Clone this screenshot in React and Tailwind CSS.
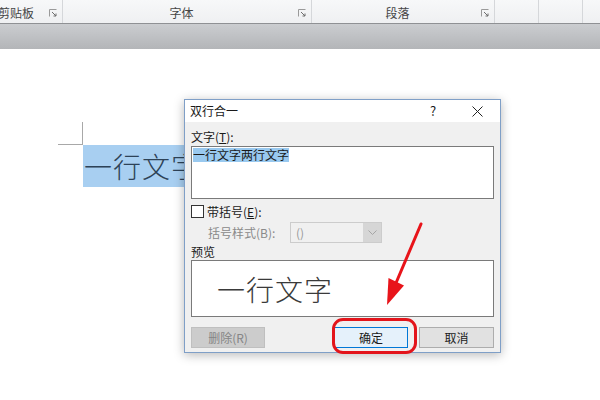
import React from 'react';

const CJK = { fontFamily: '"Noto Sans CJK SC", "Noto Sans", sans-serif' };

function Launcher() {
  // small "dialog launcher" glyph in the ribbon group corner
  return (
    <svg width="8" height="8" viewBox="0 0 8 8" className="shrink-0">
      <path d="M0.5 7.5V0.5H7.5" fill="none" stroke="#9a9a9a" strokeWidth="1" />
      <path d="M3 3L7 7M7 4.5V7H4.5" fill="none" stroke="#6d6d6d" strokeWidth="1" />
    </svg>
  );
}

function RibbonGroup({ width, label, labelClass = '', launcher = true }) {
  return (
    <div
      className="h-full flex items-center border-r border-[#d5d7da] pt-[3px] relative"
      style={{ width }}
    >
      <span className={`flex-1 text-[12px] text-[#454545] leading-none whitespace-nowrap ${labelClass}`}>{label}</span>
      {launcher && <span className="mr-[5px]"><Launcher /></span>}
    </div>
  );
}

function Ribbon() {
  return (
    <div className="h-[24px] flex bg-gradient-to-b from-[#f7f8f9] to-[#eff0f2] border-b border-[#8f9194] overflow-hidden">
      <RibbonGroup width={63} label="剪贴板" labelClass="-ml-[2px]" />
      <RibbonGroup width={249} label="字体" labelClass="text-center pl-[2px]" />
      <RibbonGroup width={183} label="段落" labelClass="text-center pl-[2px]" />
      <RibbonGroup width={44} label="" launcher={false} />
      <RibbonGroup width={44} label="" launcher={false} />
      <div className="flex-1" />
    </div>
  );
}

function Dialog() {
  return (
    <div
      className="absolute left-[184px] top-[99px] w-[317px] h-[254px] border border-[#7f9fc7] bg-[#f0f0f0] shadow-[0_2px_10px_rgba(0,0,0,0.28)] flex flex-col"
      style={CJK}
    >
      <div className="h-[22px] bg-white flex items-center pl-[5px] text-[12px] text-[#1a1a1a]">
        <span className="flex-1">双行合一</span>
        <span className="w-[10px] text-center text-[13px] mr-[34px]">?</span>
        <svg width="11" height="11" viewBox="0 0 11 11" className="mr-[17px]">
          <path d="M0.5 0.5L10.5 10.5M10.5 0.5L0.5 10.5" stroke="#222" strokeWidth="1" />
        </svg>
      </div>

      <div className="flex-1 px-[6px] pt-[8px] text-[12px] text-[#1a1a1a] leading-[14px]">
        <div className="h-[14px]">文字(<u>T</u>):</div>
        <div className="mt-[2px] h-[53px] bg-white border border-[#7a7a7a] px-[1px] pt-[1px]">
          <div className="inline-block h-[14px] bg-[#99c9ef] text-[12px] leading-[14px]">一行文字两行文字</div>
        </div>

        <div className="mt-[6px] flex items-center h-[13px]">
          <span className="w-[13px] h-[13px] border border-[#333] bg-white mr-[3px]" />
          <span>带括号(<u>E</u>):</span>
        </div>

        <div className="mt-[4px] flex items-center h-[21px]">
          <span className="ml-[17px] w-[82px] text-[#8a8a8a]">括号样式(B):</span>
          <div className="w-[92px] h-[21px] flex border border-[#cccccc] bg-[#f0f0f0]">
            <span className="flex-1 pl-[5px] text-[#9a9a9a] leading-[19px]">()</span>
            <span className="w-[18px] h-full bg-[#d6d6d6] flex items-center justify-center">
              <svg width="9" height="6" viewBox="0 0 9 6">
                <path d="M0.5 0.5L4.5 4.5L8.5 0.5" fill="none" stroke="#a5a5a5" strokeWidth="1" />
              </svg>
            </span>
          </div>
        </div>

        <div className="mt-[2px]">预览</div>
        <div className="mt-[1px] h-[57px] bg-white border border-[#7a7a7a] flex items-center pl-[25px]">
          <span className="text-[28px] leading-none text-[#3a3a3a] font-light tracking-[1px]">一行文字</span>
        </div>

        <div className="mt-[10px] flex items-center">
          <span className="w-[74px] h-[21px] bg-[#cccccc] border border-[#bfbfbf] text-[#858585] flex items-center justify-center">
            删除(R)
          </span>
          <span className="ml-auto w-[74px] h-[21px] bg-[#e5f1fb] border border-[#0078d7] flex items-center justify-center">
            确定
          </span>
          <span className="ml-[11px] w-[75px] h-[21px] bg-[#e1e1e1] border border-[#adadad] flex items-center justify-center">
            取消
          </span>
        </div>
      </div>
    </div>
  );
}

function Annotation() {
  return (
    <>
      <div className="absolute left-[332px] top-[318px] w-[85px] h-[36px] border-[3px] border-[#e3141b] rounded-[11px]" />
      <svg className="absolute inset-0 pointer-events-none" width="600" height="400" viewBox="0 0 600 400">
        <line x1="421" y1="224" x2="396" y2="283" stroke="#e8141a" strokeWidth="3" strokeLinecap="round" />
        <polygon points="387,305 388.5,278 404,285.5" fill="#e8141a" />
      </svg>
    </>
  );
}

export default function App() {
  return (
    <div className="relative w-[600px] h-[400px] overflow-hidden bg-white" style={CJK}>
      <Ribbon />
      <div className="h-[25px] bg-gradient-to-b from-[#cbcdd0] to-[#b3b5b8]" />
      <div className="pt-[73px] pl-[58px]">
        <div className="w-[25px] h-[23px] border-r border-b border-[#a8a8a8]" />
        <div className="ml-[25px]">
          <span className="inline-block bg-[#a8cff1] h-[42px] pl-[1px] pr-[6px] text-[28px] leading-[42px] text-[#2d4257] font-light tracking-[1px] whitespace-nowrap">
            一行文字
          </span>
        </div>
      </div>
      <Dialog />
      <Annotation />
    </div>
  );
}
